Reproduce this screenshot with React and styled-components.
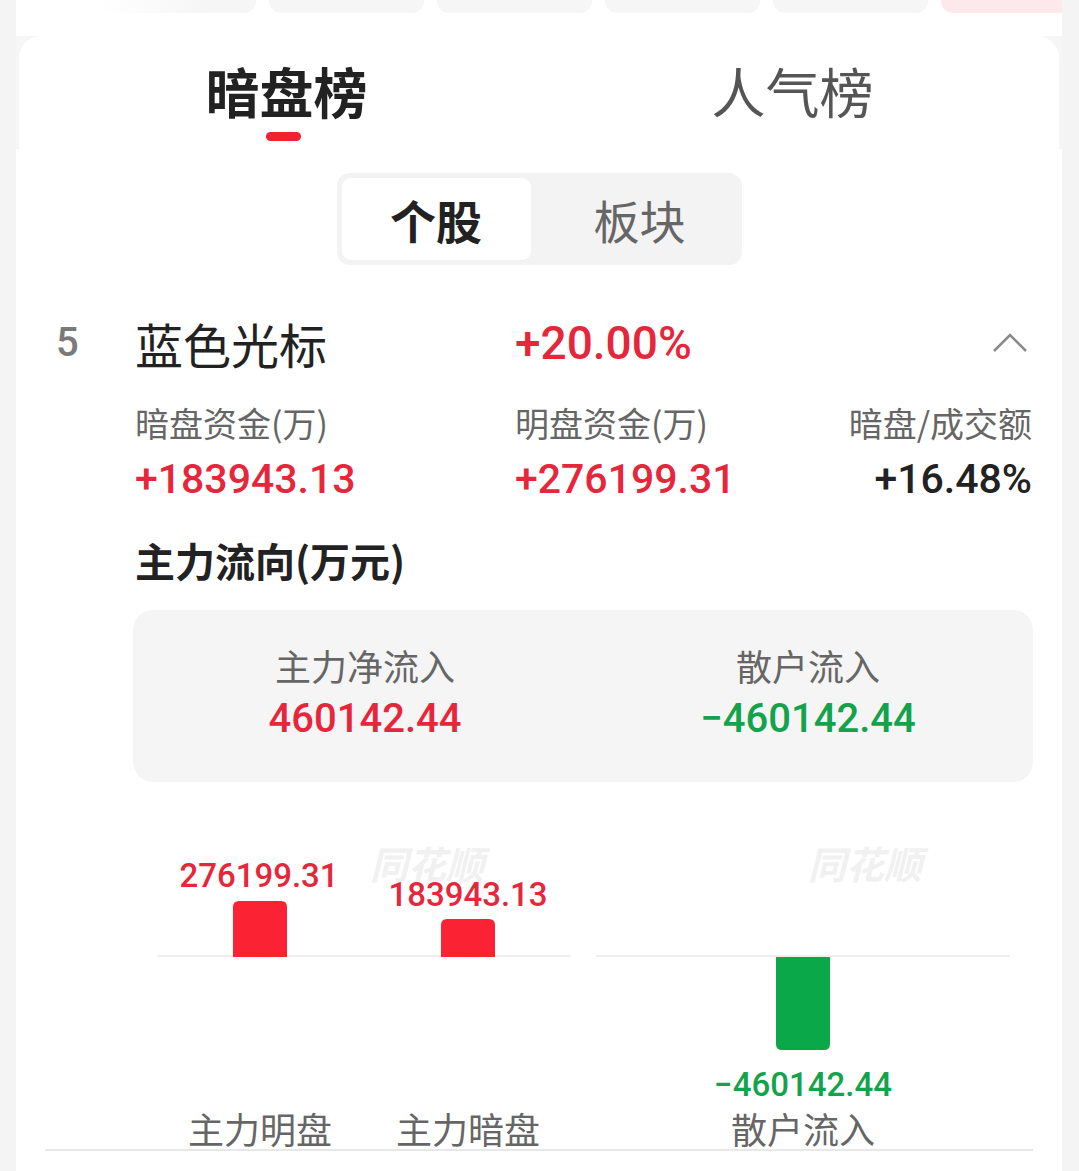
import React from "react";
import styled, { createGlobalStyle } from "styled-components";

const CJK = `"Noto Sans CJK SC", "Noto Sans", sans-serif`;
const NUM = `Roboto, "Noto Sans CJK SC", sans-serif`;
const RED = "#e5263b";
const GREEN = "#12a34c";

const Global = createGlobalStyle`
  html, body { margin: 0; padding: 0; background: #f4f4f4; }
  body { font-family: ${CJK}; }
`;

const Panel = styled.div`
  margin-left: 16px;
  width: 1046px;
  min-height: 1171px;
  background: #fff;
  overflow: hidden;
`;

const ChipsRow = styled.div`
  display: flex;
  gap: 13px;
  height: 13px;
  padding-left: 85px;
  margin-bottom: 23px;
`;

const Chip = styled.div`
  flex: 0 0 155px;
  height: 13px;
  border-radius: 0 0 12px 12px;
  background: ${(p) =>
    p.$fade
      ? "linear-gradient(to right, rgba(246,246,246,0), #f6f6f6 70%)"
      : p.$pink
      ? "#fde9eb"
      : "#f6f6f6"};
`;

const HeaderWrap = styled.div`
  background: #f6f6f6;
  padding: 0 3px;
`;

const HeaderCard = styled.div`
  background: #fff;
  border-radius: 22px 22px 0 0;
  display: grid;
  grid-template-columns: 509px 509px;
  padding: 24px 0 8px 10px;
`;

const Tab = styled.div`
  display: flex;
  flex-direction: column;
  align-items: center;
`;

const TabText = styled.div`
  font-family: ${CJK};
  font-size: 54px;
  line-height: 62px;
  font-weight: ${(p) => (p.$active ? 700 : 400)};
  color: ${(p) => (p.$active ? "#222" : "#555")};
  transform: translateX(${(p) => (p.$active ? "3px" : "0px")});
`;

const TabBar = styled.div`
  margin-top: 10px;
  width: 35px;
  height: 9px;
  border-radius: 5px;
  background: ${(p) => (p.$active ? "#ee2233" : "transparent")};
`;

const Segment = styled.div`
  margin: 24px auto 0;
  width: 405px;
  height: 92px;
  box-sizing: border-box;
  padding: 5px;
  border-radius: 13px;
  background: #f3f3f3;
  display: flex;
`;

const SegItem = styled.div`
  flex: ${(p) => (p.$active ? "0 0 189px" : "1")};
  display: flex;
  align-items: center;
  justify-content: center;
  padding-left: ${(p) => (p.$active ? "0" : "12px")};
  border-radius: 9px;
  background: ${(p) => (p.$active ? "#fff" : "transparent")};
  font-family: ${CJK};
  font-size: 46px;
  font-weight: ${(p) => (p.$active ? 700 : 400)};
  color: ${(p) => (p.$active ? "#222" : "#666")};
`;

const StockGrid = styled.div`
  margin: 50px 30px 0 40px;
  display: grid;
  grid-template-columns: 79px 380px 1fr auto;
  align-items: center;
`;

const Rank = styled.div`
  font-family: ${NUM};
  font-size: 40px;
  font-weight: 500;
  line-height: 56px;
  color: #7a7a7a;
`;

const Name = styled.div`
  font-family: ${CJK};
  font-size: 48px;
  line-height: 56px;
  color: #222;
`;

const Pct = styled.div`
  font-family: ${NUM};
  font-size: 46px;
  font-weight: 500;
  line-height: 56px;
  color: ${RED};
`;

const Chevron = styled.svg`
  justify-self: end;
  margin-right: 5px;
  display: block;
`;

const Label = styled.div`
  grid-column: ${(p) => p.$col};
  justify-self: ${(p) => (p.$right ? "end" : "start")};
  margin-top: 32px;
  font-family: ${CJK};
  font-size: 34px;
  line-height: 40px;
  color: #666;
`;

const Value = styled.div`
  grid-column: ${(p) => p.$col};
  justify-self: ${(p) => (p.$right ? "end" : "start")};
  margin-top: 14px;
  font-family: ${NUM};
  font-size: 41px;
  font-weight: 500;
  line-height: 44px;
  color: ${(p) => p.$color};
`;

const Title = styled.div`
  grid-column: 2 / -1;
  margin-top: 35px;
  font-family: ${CJK};
  font-size: 40px;
  font-weight: 700;
  line-height: 48px;
  color: #222;
`;

const FlowCard = styled.div`
  grid-column: 2 / -1;
  margin: 26px -1px 0 -2px;
  height: 172px;
  box-sizing: border-box;
  padding-top: 33px;
  border-radius: 20px;
  background: #f5f5f5;
  display: grid;
  grid-template-columns: 1fr 1fr;
`;

const FlowCol = styled.div`
  display: flex;
  flex-direction: column;
  align-items: center;
  padding-left: ${(p) => p.$shift || 0}px;
`;

const FlowLabel = styled.div`
  font-family: ${CJK};
  font-size: 36px;
  line-height: 44px;
  color: #666;
`;

const FlowValue = styled.div`
  margin-top: 8px;
  font-family: ${NUM};
  font-size: 40px;
  font-weight: 500;
  line-height: 48px;
  color: ${(p) => p.$color};
`;

const Chart = styled.svg`
  display: block;
`;

const Divider = styled.div`
  margin-left: 29px;
  width: 988px;
  height: 2px;
  background: #e8e8e8;
`;

function BarChart() {
  const num = { fontFamily: "Roboto, sans-serif", fontSize: 33, fontWeight: 500 };
  const cjk = { fontFamily: '"Noto Sans CJK SC", sans-serif', fontSize: 36 };
  const wm = {
    fontFamily: '"Noto Sans CJK SC", sans-serif',
    fontSize: 38,
    fontWeight: 700,
    fontStyle: "italic",
  };
  return (
    <Chart width="1046" height="367" viewBox="0 0 1046 367">
      <text x="354" y="97" fill="#f1f1f1" style={wm}>同花顺</text>
      <text x="792" y="97" fill="#f1f1f1" style={wm}>同花顺</text>
      <line x1="141" y1="174" x2="555" y2="174" stroke="#eeeeee" strokeWidth="2" />
      <line x1="580" y1="174" x2="994" y2="174" stroke="#eeeeee" strokeWidth="2" />
      <path d="M217 175 V125 Q217 119 223 119 H265 Q271 119 271 125 V175 Z" fill="#fb2234" />
      <path d="M425 175 V143 Q425 137 431 137 H473 Q479 137 479 143 V175 Z" fill="#fb2234" />
      <path d="M760 175 V262 Q760 268 766 268 H808 Q814 268 814 262 V175 Z" fill="#0ba84a" />
      <text x="243" y="105" textAnchor="middle" fill={RED} style={num}>276199.31</text>
      <text x="452" y="124" textAnchor="middle" fill={RED} style={num}>183943.13</text>
      <text x="787" y="314" textAnchor="middle" fill={GREEN} style={num}>−460142.44</text>
      <text x="244" y="362" textAnchor="middle" fill="#666" style={cjk}>主力明盘</text>
      <text x="452" y="362" textAnchor="middle" fill="#666" style={cjk}>主力暗盘</text>
      <text x="787" y="362" textAnchor="middle" fill="#666" style={cjk}>散户流入</text>
    </Chart>
  );
}

export default function App() {
  return (
    <>
      <Global />
      <Panel>
        <ChipsRow>
          <Chip $fade />
          <Chip />
          <Chip />
          <Chip />
          <Chip />
          <Chip $pink />
        </ChipsRow>
        <HeaderWrap>
          <HeaderCard>
            <Tab>
              <TabText $active>暗盘榜</TabText>
              <TabBar $active />
            </Tab>
            <Tab>
              <TabText>人气榜</TabText>
              <TabBar />
            </Tab>
          </HeaderCard>
        </HeaderWrap>
        <Segment>
          <SegItem $active>个股</SegItem>
          <SegItem>板块</SegItem>
        </Segment>
        <StockGrid>
          <Rank>5</Rank>
          <Name>蓝色光标</Name>
          <Pct>+20.00%</Pct>
          <Chevron width="34" height="20" viewBox="0 0 34 20">
            <polyline points="1,18 17,2 33,18" fill="none" stroke="#8a8a8a" strokeWidth="2.5" />
          </Chevron>

          <Label $col={2}>暗盘资金(万)</Label>
          <Label $col={3}>明盘资金(万)</Label>
          <Label $col={4} $right>暗盘/成交额</Label>

          <Value $col={2} $color={RED}>+183943.13</Value>
          <Value $col={3} $color={RED}>+276199.31</Value>
          <Value $col={4} $right $color="#222">+16.48%</Value>

          <Title>主力流向(万元)</Title>

          <FlowCard>
            <FlowCol $shift={14}>
              <FlowLabel>主力净流入</FlowLabel>
              <FlowValue $color={RED}>460142.44</FlowValue>
            </FlowCol>
            <FlowCol>
              <FlowLabel>散户流入</FlowLabel>
              <FlowValue $color={GREEN}>−460142.44</FlowValue>
            </FlowCol>
          </FlowCard>
        </StockGrid>
        <BarChart />
        <Divider />
      </Panel>
    </>
  );
}
